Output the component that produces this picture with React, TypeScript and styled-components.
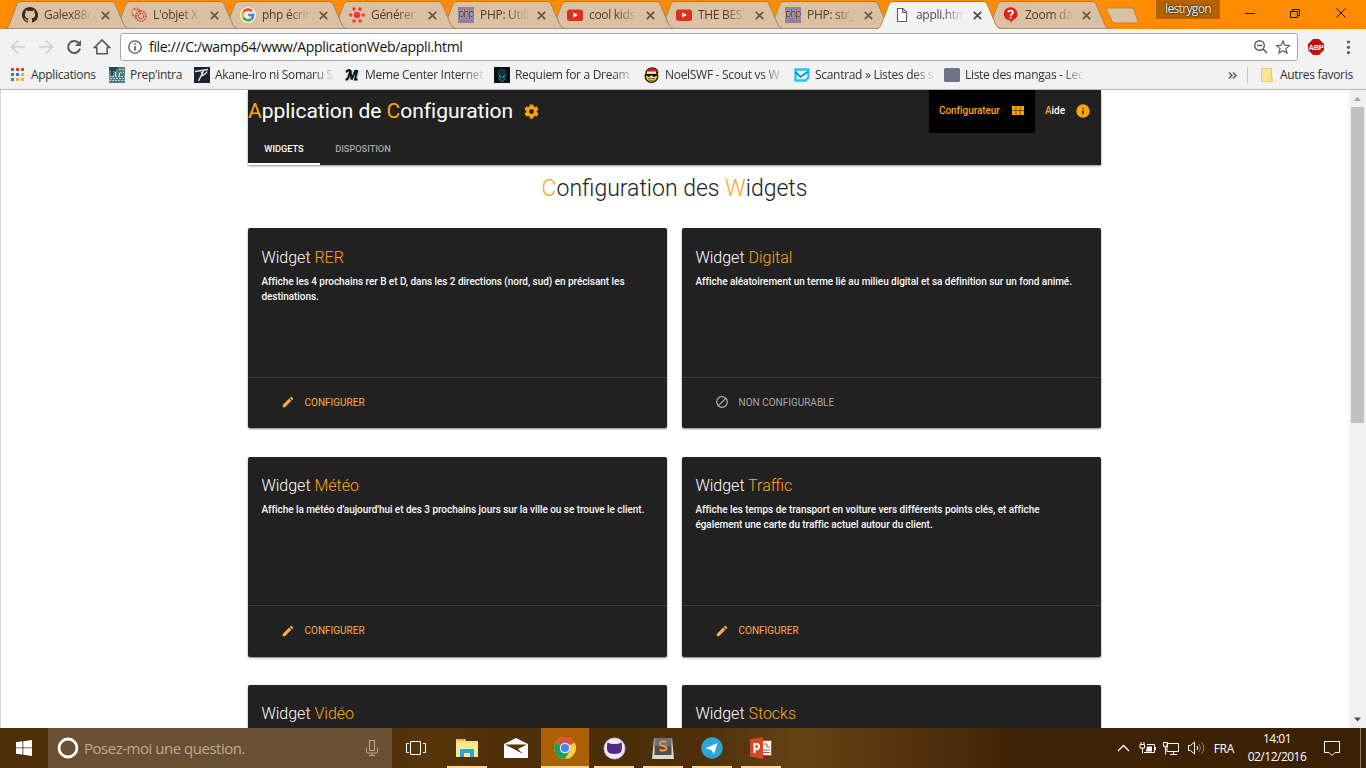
import React from "react";
import styled, { createGlobalStyle } from "styled-components";

const Global = createGlobalStyle`
  *, *::before, *::after { box-sizing: border-box; }
  body { margin: 0; overflow: hidden; background: #fff; }
  p, h1, h2, h3 { margin: 0; font-weight: 400; }
  svg { display: block; flex: none; }
`;

const Screen = styled.div`
  width: 1366px;
  height: 768px;
  display: flex;
  flex-direction: column;
  overflow: hidden;
  font-family: "Open Sans", "Noto Sans", sans-serif;
  font-size: 12px;
  color: #333;
`;

const Label = styled.span<{ $ls?: number; $w?: number }>`
  white-space: nowrap;
  letter-spacing: ${(p) => p.$ls ?? -0.3}px;
  ${(p) => (p.$w ? `width: ${p.$w}px; mask-image: linear-gradient(90deg, #000 ${p.$w - 22}px, transparent ${p.$w}px);` : "")}
`;

/* ---------- Tab strip ---------- */

const TabStrip = styled.div`
  display: flex;
  height: 29px;
  padding-left: 5px;
  background: #ff8c00;
`;

const TabItem = styled.div<{ $z: number }>`
  position: relative;
  z-index: ${(p) => p.$z};
  flex: none;
  width: 124px;
  height: 29px;
  margin-right: -15px;
`;

const TabShape = styled.svg`
  position: absolute;
  inset: 0;
`;

const TabContent = styled.div`
  position: relative;
  display: flex;
  align-items: center;
  height: 29px;
  padding-left: 17px;
  padding-top: 1px;
`;

const TabTitle = styled(Label)<{ $active?: boolean }>`
  flex: none;
  margin: 0 8px 0 6px;
  line-height: 18px;
  color: ${(p) => (p.$active ? "#4a4a4a" : "#4f3d29")};
`;

const NewTab = styled.svg`
  margin: 7px 0 0 10px;
`;

const UserBadge = styled.div`
  width: 64px;
  height: 19px;
  margin-left: 17px;
  background: #b36200;
  color: #fff;
  text-align: center;
  line-height: 18px;
  text-shadow: 0 0 2px #000, 0 0 1px #000;
`;

const WindowButtons = styled.svg`
  margin-left: 20px;
`;

/* ---------- Toolbar ---------- */

const Toolbar = styled.div`
  display: flex;
  align-items: center;
  height: 34px;
  padding: 2px 0 0 9px;
  background: #f2f2f2;
`;

const NavIcons = styled.svg`
  margin-right: 9px;
`;

const AddressBar = styled.div`
  display: flex;
  align-items: center;
  width: 1178px;
  height: 28px;
  padding: 0 6px 0 7px;
  border: 1px solid #a8a8a8;
  border-radius: 3px;
  background: #fff;
`;

const Url = styled.span`
  flex: 1;
  margin-left: 7px;
  font-size: 14px;
  line-height: 20px;
  letter-spacing: -0.32px;
  color: #111;
`;

const Bookmarks = styled.div`
  position: relative;
  display: flex;
  height: 27px;
  padding-left: 10px;
  border-bottom: 1px solid #b6b4b6;
  background: #f2f2f2;
`;

const Bookmark = styled.div<{ $w: number }>`
  display: flex;
  align-items: center;
  gap: 5px;
  flex: none;
  width: ${(p) => p.$w}px;
  height: 24px;
  color: #333;

  > span {
    margin-top: -1px;
  }
`;

const BarDivider = styled.div`
  width: 1px;
  height: 16px;
  margin: 4px 11px 0 8px;
  background: #c4c4c4;
`;

/* ---------- Page ---------- */

const Viewport = styled.div`
  display: flex;
  height: 638px;
  overflow: hidden;
  border-left: 1px solid #d8d8d8;
  background: #fff;
  font-family: Roboto, sans-serif;
`;

const Page = styled.main`
  flex: none;
  width: 853px;
  margin-left: 247px;
`;

const Header = styled.header`
  display: flex;
  flex-direction: column;
  height: 75px;
  background: #212121;
  box-shadow: 0 1px 2px rgba(0, 0, 0, 0.45);
`;

const HeaderTop = styled.div`
  display: flex;
  justify-content: space-between;
  height: 43px;
`;

const Brand = styled.h1`
  display: flex;
  align-items: center;
  gap: 10px;
  height: 42px;
  font-size: 21px;
  letter-spacing: -0.02px;
  color: #fff;
  white-space: pre;
`;

const Accent = styled.span`
  color: #ffa617;
`;

const Nav = styled.nav`
  display: flex;
`;

const NavLink = styled.a<{ $active?: boolean; $w: number }>`
  display: flex;
  align-items: center;
  justify-content: space-between;
  width: ${(p) => p.$w}px;
  height: 43px;
  padding: ${(p) => (p.$active ? "0 11px 2px 10px" : "0 10px 2px 10px")};
  background: ${(p) => (p.$active ? "#000" : "transparent")};
  color: ${(p) => (p.$active ? "#ffa617" : "#fff")};
  font-size: 10px;
  font-weight: 500;
  letter-spacing: -0.06px;
`;

const Tabs = styled.div`
  display: flex;
  height: 32px;
`;

const PageTab = styled.div<{ $active?: boolean; $w: number }>`
  width: ${(p) => p.$w}px;
  height: 32px;
  border-bottom: 2px solid ${(p) => (p.$active ? "#fff" : "transparent")};
  color: ${(p) => (p.$active ? "#fff" : "#a6a6a6")};
  text-align: center;
  font-size: 9.2px;
  font-weight: 500;
  line-height: 32px;
`;

const Title = styled.h2`
  height: 63.3px;
  padding-top: 10px;
  text-align: center;
  font-size: 23px;
  font-weight: 300;
  line-height: 28px;
  color: #212121;
`;

const Grid = styled.div`
  display: grid;
  grid-template-columns: 419px 419px;
  gap: 28.25px 15px;
`;

const Card = styled.article`
  display: flex;
  flex-direction: column;
  height: 200px;
  border-radius: 2px;
  background: #212121;
  box-shadow: 0 1px 2px rgba(0, 0, 0, 0.5);
`;

const CardBody = styled.div`
  flex: 1;
  padding: 18.5px 13px 0 13.4px;
`;

const CardTitle = styled.h3`
  font-size: 16px;
  line-height: 21px;
  font-weight: 300;
  color: #fff;
`;

const CardText = styled.p`
  margin-top: 6px;
  font-size: 10px;
  font-weight: 500;
  letter-spacing: -0.045px;
  line-height: 15px;
  color: #fafafa;
`;

const CardAction = styled.div<{ $off?: boolean }>`
  display: flex;
  align-items: center;
  gap: 9.5px;
  height: 51.1px;
  padding: 0 0 2px 33px;
  border-top: 1px solid #3a3a3a;
  color: ${(p) => (p.$off ? "#a8a8a8" : "#ffab40")};
  font-size: 10px;
`;

const Scrollbar = styled.div`
  display: flex;
  flex-direction: column;
  align-items: center;
  justify-content: space-between;
  width: 17px;
  height: 638px;
  margin-left: auto;
  background: #f1f1f1;
`;

const ScrollThumb = styled.div`
  width: 13px;
  height: 316px;
  margin-bottom: auto;
  background: #c1c1c1;
`;

/* ---------- Taskbar ---------- */

const Taskbar = styled.footer`
  display: flex;
  height: 40px;
  background: linear-gradient(90deg, #4c2e08 0, #4c2e08 380px, #563509 420px, #4a2c08 560px, #4e2f09 700px, #644414 800px, #5a3a11 860px, #4c2d0a 950px, #402304 1010px, #3a2005 1366px);
  color: #fff;
`;

const StartButton = styled.div`
  width: 48px;
  padding: 12px 0 0 16px;
`;

const Search = styled.div`
  display: flex;
  align-items: center;
  width: 344px;
  height: 40px;
  padding: 0 14px 0 8px;
  background: #6a5033;
  color: #b9aa98;
`;

const SearchText = styled.span`
  flex: 1;
  margin-left: 4px;
  font-size: 15px;
  letter-spacing: -0.48px;
`;

const TaskItem = styled.div<{ $w: number; $open?: boolean; $active?: boolean; $lead?: number }>`
  display: flex;
  align-items: center;
  justify-content: center;
  flex: none;
  width: ${(p) => p.$w}px;
  height: 40px;
  margin-left: ${(p) => p.$lead ?? 0}px;
  margin-right: ${(p) => (p.$open && !p.$active ? 9 : 0)}px;
  background: ${(p) => (p.$active ? "#ab6005" : "transparent")};
  box-shadow: ${(p) => (p.$open ? "inset 0 -2px #ffd59b" : "none")};
`;

const Tray = styled.div`
  display: flex;
  align-items: center;
  margin-left: auto;
`;

const Language = styled(Label)`
  margin-left: 9px;
`;

const Clock = styled.div`
  width: 60px;
  margin: 0 17px 0 13px;
  padding-bottom: 1px;
  text-align: center;
  line-height: 18px;
  letter-spacing: -0.5px;
  white-space: nowrap;
`;

const PeekLine = styled.div`
  width: 1px;
  height: 40px;
  margin: 0 5px 0 20px;
  background: #8b7a67;
`;

/* ---------- Icons ---------- */

const GithubMark = () => (
  <svg width="16" height="16" viewBox="0 0 16 16">
    <path fill="#3d2b1c" d="M8 0C3.58 0 0 3.58 0 8c0 3.54 2.29 6.53 5.47 7.59.4.07.55-.17.55-.38v-1.49c-2.01.37-2.53-.49-2.69-.94-.09-.23-.48-.94-.82-1.13-.28-.15-.68-.52-.01-.53.63-.01 1.08.58 1.23.82.72 1.21 1.87.87 2.33.66.07-.52.28-.87.51-1.07-1.78-.2-3.64-.89-3.64-3.95 0-.87.31-1.59.82-2.15-.08-.2-.36-1.02.08-2.12 0 0 .67-.21 2.2.82a7.6 7.6 0 0 1 4 0c1.53-1.04 2.2-.82 2.2-.82.44 1.1.16 1.92.08 2.12.51.56.82 1.27.82 2.15 0 3.07-1.87 3.75-3.65 3.95.29.25.54.73.54 1.48v2.2c0 .21.15.46.55.38A8 8 0 0 0 8 0z" />
  </svg>
);

const Swirl = () => (
  <svg width="16" height="16" viewBox="0 0 16 16" fill="none" stroke="#cc5234" strokeWidth="1.4" strokeDasharray="1.8 .8">
    <circle cx="5" cy="5" r="4" stroke="#d98a55" />
    <circle cx="10" cy="9" r="5.2" />
    <circle cx="10" cy="9" r="2.7" />
    <path d="M1 8c2 0 3 1 4 4M3 2l8 2" />
  </svg>
);

const GoogleG = () => (
  <svg width="16" height="16" viewBox="0 0 16 16">
    <circle cx="8" cy="8" r="8" fill="#f7efe6" />
    <g fill="none" strokeWidth="2.6">
      <path stroke="#ea4335" d="M3.4 5.2A5.2 5.2 0 0 1 11.8 4.2" />
      <path stroke="#fbbc05" d="M3.5 10.8a5.4 5.4 0 0 1 0-5.7" />
      <path stroke="#34a853" d="M11.8 11.7A5.3 5.3 0 0 1 3.4 10.7" />
      <path stroke="#4285f4" d="M8.2 8h5c0 1.8-.6 2.9-1.6 3.9" />
    </g>
  </svg>
);

const RedDots = () => (
  <svg width="16" height="16" viewBox="0 0 16 16" fill="#f0392b">
    <circle cx="8" cy="8" r="3.3" />
    <circle cx="5" cy="2" r="1.7" /><circle cx="11" cy="2" r="1.7" />
    <circle cx="1.8" cy="8" r="1.7" /><circle cx="14.2" cy="8" r="1.7" />
    <circle cx="5" cy="14" r="1.7" /><circle cx="11" cy="14" r="1.7" />
  </svg>
);

const PhpBox = styled.span`
  flex: none;
  width: 16px;
  height: 16px;
  background: #95809a;
  color: #1d1822;
  font: 400 10px/14px "Liberation Sans", sans-serif;
  letter-spacing: -0.5px;
  text-align: center;
  text-shadow: 0 0 1px #fff, 0 0 1px #fff;
`;

const Youtube = () => (
  <svg width="16" height="16" viewBox="0 0 16 16">
    <rect y="2.5" width="16" height="11.5" rx="2.5" fill="#e02f20" />
    <path d="M6.3 5.6v5l4.6-2.5z" fill="#fff" />
  </svg>
);

const DocIcon = () => (
  <svg width="16" height="16" viewBox="0 0 16 16" fill="#fff" stroke="#5d5d5d" strokeWidth="1.1">
    <path d="M3.5 1.5h5.3l3.7 3.7v9.3h-9zM8.6 1.5v4h4" />
  </svg>
);

const QuestionPin = () => (
  <svg width="16" height="16" viewBox="0 0 16 16">
    <path d="M7.5.3a6.6 6.6 0 0 1 2.6 12.8L7.7 16l-.6-2.4A6.6 6.6 0 0 1 7.5.3z" fill="#dd2418" />
    <path d="M5 5.2c.4-2 4.7-2.2 5 .1.1 1.6-2.3 1.7-2.3 3.4M7.6 9.7v1.8" stroke="#fff" strokeWidth="1.8" fill="none" />
  </svg>
);

const CloseX = ({ color }: { color: string }) => (
  <svg width="9" height="9" viewBox="0 0 9 9" stroke={color} strokeWidth="1.7">
    <path d="M.8.8l7.4 7.4M8.2.8L.8 8.2" />
  </svg>
);

const AppsGrid = () => (
  <svg width="16" height="16" viewBox="0 0 16 16">
    {["#e53935", "#e53935", "#e53935", "#1e9e52", "#2979f0", "#fbb01a", "#1e9e52", "#fbb01a", "#fbb01a"].map((c, i) => (
      <rect key={i} x={1 + (i % 3) * 5} y={1 + Math.floor(i / 3) * 5} width="3" height="3" fill={c} />
    ))}
  </svg>
);

const PrepIcon = () => (
  <svg width="16" height="16" viewBox="0 0 16 16">
    <path fill="#4f7f80" d="M0 0h16v16H0z" />
    <path fill="#24494e" d="M0 0h9v2H7v2H4v4H2V3H0z" />
    <path stroke="#b8d0cd" strokeDasharray="2 1" d="M0 9.500h16M1 11.500h14M0 13.500h16M10 2.500h5M11 5.500h4" />
    <path stroke="#dceae8" d="M10.500 6v3M6.500 5v4" />
  </svg>
);

const AkaneIcon = () => (
  <svg width="16" height="16" viewBox="0 0 16 16">
    <path fill="#192331" d="M0 0h16v16H0z" />
    <path d="M1 4.500l13-2M7 6l2-1-4.500 9M13 4.500C12 7 10 8 7 9" fill="none" stroke="#dfe5ec" strokeWidth="1.4" />
  </svg>
);

const MemeIcon = () => (
  <svg width="16" height="16" viewBox="0 0 16 16" fill="none">
    <path d="M2 13.500q2.500-1 3.500-6L6.500 3M7.500 13L11.500 3.500M11 13.500L13.500 3.500" stroke="#a9def0" strokeWidth="4.500" />
    <path d="M1.500 12.500q2.500.5 3.500-4L6.500 3M6.500 3l1 9.500M7.500 12.500L11.800 3M13.300 3L11 12.500h2.500M2.500 5.500q0-2.500 4-2.500" stroke="#0c1116" strokeWidth="1.900" />
  </svg>
);

const AlienIcon = () => (
  <svg width="16" height="16" viewBox="0 0 16 16">
    <path fill="#070e12" d="M0 0h16v16H0z" />
    <path d="M8 1.500c4 0 5 3 4.500 6S9.500 14 8 15c-1.500-1-4-4.500-4.500-7.500S4 1.500 8 1.500z" fill="#12313b" />
    <path d="M4 7l3 2.500v2zM12 7L9 9.500v2z" fill="#1ed4f4" />
    <path d="M4.500 11Q6 14 8 15q2-1 3.500-4" stroke="#1583a0" fill="none" />
  </svg>
);

const NoelIcon = () => (
  <svg width="16" height="16" viewBox="0 0 16 16">
    <circle cx="7.500" cy="9" r="6.300" fill="#ffd928" stroke="#1b1200" strokeWidth="1.300" />
    <path d="M2 5C3 .5 9 0 12.500 2l1.500 3.500z" fill="#e01515" stroke="#250404" />
    <path d="M3 5.200h9" stroke="#fff" strokeWidth="1.400" />
    <path d="M2 7h11v1.500L10 10 7.500 8.300 5 10 2 8.500zM4 11.300h7L9.500 13.500h-4z" fill="#120d00" />
    <path d="M5 12.200h5" stroke="#fff" />
  </svg>
);

const ScantradIcon = () => (
  <svg width="16" height="16" viewBox="0 0 16 16" fill="none">
    <path d="M1.500 2.500h13v8l-3 3h-10z" fill="#e4f7ff" stroke="#20c8f5" strokeWidth="2.400" />
    <path d="M1.500 5l5 5L14 4.500" stroke="#2787cf" strokeWidth="2" />
  </svg>
);

const FolderSheet = () => (
  <svg width="16" height="16" viewBox="0 0 16 16">
    <path d="M2.500 1.500h10v13h-10z" fill="#ffe694" stroke="#ebc95d" />
    <path d="M11.500 10.500h2v4h-2.500z" fill="#ffe694" stroke="#ebc95d" />
  </svg>
);

const Cog = () => (
  <svg width="17" height="17" viewBox="0 0 24 24" fill="#ffa500">
    <path d="M19.430 12.980c.040-.320.070-.640.070-.980s-.030-.660-.070-.980l2.110-1.650c.190-.150.240-.420.120-.640l-2-3.460c-.120-.220-.390-.300-.610-.220l-2.490 1c-.520-.400-1.080-.730-1.690-.980l-.380-2.650C14.460 2.180 14.250 2 14 2h-4c-.250 0-.460.180-.490.420l-.380 2.650c-.610.250-1.170.590-1.690.980l-2.490-1c-.230-.090-.490 0-.610.220l-2 3.460c-.130.220-.070.490.120.640l2.110 1.650c-.040.320-.070.650-.070.980s.030.660.070.980l-2.110 1.650c-.190.150-.240.420-.120.640l2 3.460c.120.220.390.300.610.220l2.490-1c.520.400 1.080.730 1.690.980l.380 2.650c.030.240.240.420.490.420h4c.250 0 .460-.180.490-.420l.380-2.650c.610-.250 1.170-.590 1.690-.980l2.490 1c.230.090.490 0 .610-.220l2-3.460c.120-.220.070-.490-.120-.640l-2.110-1.650zM12 15.500c-1.930 0-3.500-1.570-3.500-3.500s1.570-3.500 3.500-3.500 3.500 1.570 3.500 3.500-1.570 3.500-3.500 3.500z" />
  </svg>
);

const ViewModule = () => (
  <svg width="12" height="9" viewBox="0 0 12 9" fill="#ffa500">
    <path fill="#7c5000" d="M0 0h12v9H0z" />
    <path d="M0 0h3.500v4H0zM4.500 0h3v4h-3zM8.500 0H12v4H8.500zM0 5h3.500v4H0zM4.500 5h3v4h-3zM8.500 5H12v4H8.500z" />
  </svg>
);

const Info = () => (
  <svg width="16" height="16" viewBox="0 0 24 24" fill="#ffa500">
    <path d="M12 2a10 10 0 1 0 0 20 10 10 0 0 0 0-20zm1 15h-2v-6h2v6zm0-8h-2V7h2v2z" />
  </svg>
);

const Pencil = () => (
  <svg width="14" height="14" viewBox="0 0 24 24" fill="#ffab40">
    <path d="M3 17.250V21h3.750L17.810 9.940l-3.750-3.750L3 17.250zM20.710 7.040a1 1 0 0 0 0-1.410l-2.340-2.340a1 1 0 0 0-1.410 0l-1.830 1.830 3.750 3.750 1.830-1.830z" />
  </svg>
);

const Blocked = () => (
  <svg width="14" height="14" viewBox="0 0 14 14" fill="none" stroke="#b2b2b2" strokeWidth="1.200">
    <circle cx="7" cy="7" r="5.300" />
    <path d="M10.700 3.300l-7.400 7.400" />
  </svg>
);

const ChromeLogo = () => (
  <svg width="22" height="22" viewBox="0 0 22 22">
    <circle cx="11" cy="11" r="11" fill="#fdd04a" />
    <path d="M11 11L1.500 5.500A11 11 0 0 1 20.500 5.500z" fill="#e0503f" />
    <path d="M11 0a11 11 0 0 1 9.500 5.500H11z" fill="#e0503f" />
    <path d="M1.500 5.500A11 11 0 0 0 11 22l4.800-8.300L11 11z" fill="#1f9f5a" />
    <circle cx="11" cy="11" r="5.200" fill="#f4f4f4" />
    <circle cx="11" cy="11" r="4.100" fill="#4285f4" />
  </svg>
);

/* ---------- Data ---------- */

const tabs: { title: string; icon: React.ReactNode; active?: boolean }[] = [
  { title: "Galex88/", icon: <GithubMark /> },
  { title: "L'objet X", icon: <Swirl /> },
  { title: "php écrir", icon: <GoogleG /> },
  { title: "Générer", icon: <RedDots /> },
  { title: "PHP: Utili", icon: <PhpBox>php</PhpBox> },
  { title: "cool kids", icon: <Youtube /> },
  { title: "THE BEST", icon: <Youtube /> },
  { title: "PHP: str_", icon: <PhpBox>php</PhpBox> },
  { title: "appli.htm", icon: <DocIcon />, active: true },
  { title: "Zoom da", icon: <QuestionPin /> },
];

const bookmarks: { title: string; icon: React.ReactNode; w: number; text?: number }[] = [
  { title: "Applications", icon: <AppsGrid />, w: 99 },
  { title: "Prep'intra", icon: <PrepIcon />, w: 85 },
  { title: "Akane-Iro ni Somaru S", icon: <AkaneIcon />, w: 150, text: 120 },
  { title: "Meme Center Internet", icon: <MemeIcon />, w: 150, text: 120 },
  { title: "Requiem for a Dream", icon: <AlienIcon />, w: 150, text: 120 },
  { title: "NoelSWF - Scout vs W", icon: <NoelIcon />, w: 150, text: 120 },
  { title: "Scantrad » Listes des s", icon: <ScantradIcon />, w: 150, text: 120 },
];

const widgets = [
  { name: "RER", text: "Affiche les 4 prochains rer B et D, dans les 2 directions (nord, sud) en précisant les destinations." },
  { name: "Digital", text: "Affiche aléatoirement un terme lié au milieu digital et sa définition sur un fond animé.", off: true },
  { name: "Météo", text: "Affiche la météo d'aujourd'hui et des 3 prochains jours sur la ville ou se trouve le client." },
  { name: "Traffic", text: "Affiche les temps de transport en voiture vers différents points clés, et affiche également une carte du traffic actuel autour du client." },
  { name: "Vidéo", text: "" },
  { name: "Stocks", text: "" },
];

function BrowserTabs() {
  return (
    <TabStrip>
      {tabs.map((t, i) => (
        <TabItem key={i} $z={t.active ? 20 : 10 - i}>
          <TabShape width="124" height="29" viewBox="0 0 124 29">
            <path
              d="M0 29C3 28 3 27 4 25L12 4Q13 1.500 16 1.500H106Q109 1.500 110 4L119 25Q120 28 124 29z"
              fill={t.active ? "#f2f2f2" : "#dbc1a3"}
            />
            <path
              d="M0 28.500C3 28 3 27 4 25L12 4Q13 1.500 16 1.500H106Q109 1.500 110 4L119 25Q120 28 124 28.500"
              fill="none"
              stroke={t.active ? "#c08040" : "#a8835a"}
            />
            <path d="M15 1.500H107" stroke="#cf7306" />
            {!t.active && <path d="M1 28.500H123" stroke="#a58e78" />}
          </TabShape>
          <TabContent>
            {t.icon}
            <TabTitle $w={49} $active={t.active}>{t.title}</TabTitle>
            <CloseX color={t.active ? "#4a4a4a" : "#6b563f"} />
          </TabContent>
        </TabItem>
      ))}
      <NewTab width="34" height="18" viewBox="0 0 34 18">
        <path d="M2 1h24q2 0 3 2l4 11q.500 2-2 2H10q-2 0-3-2L1.500 3Q1 1 2 1z" fill="#dbc1a3" stroke="#b98343" />
      </NewTab>
      <UserBadge><Label $ls={-0.65}>lestrygon</Label></UserBadge>
      <WindowButtons width="120" height="28" viewBox="0 0 120 28" fill="none" stroke="#1c1002">
        <path d="M5 13.500h10M50.500 11.500h7v6h-7zM52.500 11V9.500h7v6h-2M96.500 8.500l9 9M105.500 8.500l-9 9" />
      </WindowButtons>
    </TabStrip>
  );
}

function BrowserToolbar() {
  return (
    <Toolbar>
      <NavIcons width="102" height="24" viewBox="0 0 102 24" fill="none" strokeWidth="2">
        <path stroke="#d0d0d0" strokeWidth="1.700" d="M16 12H3M9 5.500L2.500 12 9 18.500M30 12h13M37 5.500l6.500 6.500-6.500 6.500" />
        <path stroke="#5a5a5a" d="M70 8.500A6 6 0 1 0 71 13.500" />
        <path fill="#5a5a5a" d="M72 5v6h-6z" />
        <path stroke="#5a5a5a" strokeWidth="1.600" d="M85.500 12.500L93 5l7.500 7.500h-2.300v6.200H87.800v-6.200z" />
      </NavIcons>
      <AddressBar>
        <svg width="14" height="14" viewBox="0 0 14 14" fill="none" stroke="#555">
          <circle cx="7" cy="7" r="6.200" strokeWidth="1.300" />
          <path d="M7 6v4.500M7 3.300v1.500" strokeWidth="1.600" />
        </svg>
        <Url>file:///C:/wamp64/www/ApplicationWeb/appli.html</Url>
        <svg width="38" height="16" viewBox="0 0 38 16" fill="none" stroke="#5d5d5d" strokeWidth="1.400">
          <circle cx="6.500" cy="6.500" r="4.800" />
          <path d="M10 10l4 4M4 6.500h5" strokeWidth="1.600" />
          <path d="M30 2l1.800 4.200 4.600.4-3.500 3 1.100 4.500-4-2.400-4 2.400 1.100-4.500-3.500-3 4.600-.4z" strokeWidth="1.200" />
        </svg>
      </AddressBar>
      <svg width="62" height="18" viewBox="0 0 62 18">
        <path d="M15 1h6l5 5v6l-5 5h-6l-5-5V6z" fill="#c70d0d" />
        <text x="18" y="12" textAnchor="middle" fontFamily="Liberation Sans, sans-serif" fontWeight="700" fontSize="7.500" letterSpacing="-.3" fill="#fff">ABP</text>
        <g fill="#5d5d5d">
          <circle cx="50.500" cy="4" r="1.600" /><circle cx="50.500" cy="9.300" r="1.600" /><circle cx="50.500" cy="14.600" r="1.600" />
        </g>
      </svg>
    </Toolbar>
  );
}

function BookmarksBar() {
  return (
    <Bookmarks>
      {bookmarks.map((b) => (
        <Bookmark key={b.title} $w={b.w}>
          {b.icon}
          <Label $w={b.text}>{b.title}</Label>
        </Bookmark>
      ))}
      <Bookmark $w={284}>
        <svg width="16" height="16"><rect y="1" width="16" height="14" rx="1.500" fill="#6e7484" /></svg>
        <Label $w={120}>Liste des mangas - Lec</Label>
      </Bookmark>
      <Bookmark $w={11}>
        <svg width="11" height="9" viewBox="0 0 11 9" fill="none" stroke="#555" strokeWidth="1.400">
          <path d="M1 1.500L4 4.500 1 7.500M5 1.500L8 4.500 5 7.500" />
        </svg>
      </Bookmark>
      <BarDivider />
      <Bookmark $w={106}>
        <FolderSheet />
        <Label $ls={-0.32}>Autres favoris</Label>
      </Bookmark>
    </Bookmarks>
  );
}

function WebPage() {
  return (
    <Viewport>
      <Page>
        <Header>
          <HeaderTop>
            <Brand>
              <span><Accent>A</Accent>pplication de <Accent>C</Accent>onfiguration</span>
              <Cog />
            </Brand>
            <Nav>
              <NavLink $active $w={106}>Configurateur<ViewModule /></NavLink>
              <NavLink $w={66}><span><Accent>A</Accent>ide</span><Info /></NavLink>
            </Nav>
          </HeaderTop>
          <Tabs>
            <PageTab $active $w={72}>WIDGETS</PageTab>
            <PageTab $w={86}>DISPOSITION</PageTab>
          </Tabs>
        </Header>
        <Title><Accent>C</Accent>onfiguration des <Accent>W</Accent>idgets</Title>
        <Grid>
          {widgets.map((w) => (
            <Card key={w.name}>
              <CardBody>
                <CardTitle>Widget <Accent>{w.name}</Accent></CardTitle>
                <CardText>{w.text}</CardText>
              </CardBody>
              <CardAction $off={w.off}>
                {w.off ? <Blocked /> : <Pencil />}
                {w.off ? "NON CONFIGURABLE" : "CONFIGURER"}
              </CardAction>
            </Card>
          ))}
        </Grid>
      </Page>
      <Scrollbar>
        <svg width="17" height="17"><path d="M5 11l3.500-4 3.500 4z" fill="#a3a3a3" /></svg>
        <ScrollThumb />
        <svg width="17" height="17"><path d="M5 6.500l3.500 4 3.500-4z" fill="#505050" /></svg>
      </Scrollbar>
    </Viewport>
  );
}

function WindowsTaskbar() {
  return (
    <Taskbar>
      <StartButton>
        <svg width="16" height="16" viewBox="0 0 16 16" fill="#fff">
          <path d="M0 2.200L6.500 1.300v6.200H0zM7.300 1.200L16 0v7.500H7.300zM0 8.300h6.500v6.300L0 13.700zM7.300 8.300H16V16l-8.700-1.200z" />
        </svg>
      </StartButton>
      <Search>
        <svg width="24" height="24"><circle cx="12" cy="12" r="9" fill="none" stroke="#fff" strokeWidth="2.800" /></svg>
        <SearchText>Posez-moi une question.</SearchText>
        <svg width="12" height="16" viewBox="0 0 12 16" fill="none" stroke="#b9aa98">
          <rect x="3.500" y=".5" width="5" height="10" />
          <path d="M.5 7.500v4q0 1.500 1.500 1.500h8q1.500 0 1.500-1.500v-4M6 13v2.500M3 15.500h6" />
        </svg>
      </Search>
      <TaskItem $w={48}>
        <svg width="20" height="15" viewBox="0 0 20 15" fill="none" stroke="#fff">
          <path d="M4.500 .5h10v13h-10zM3 2.500H.5v9H3M17 2.500h2.500v9H17" />
        </svg>
      </TaskItem>
      <TaskItem $w={40} $open $lead={7}>
        <svg width="22" height="20" viewBox="0 0 22 20">
          <path d="M0 1h9l1 2h12v16H0z" fill="#f9dd80" />
          <path d="M1 2h7" stroke="#f3b52e" strokeWidth="2" />
          <path d="M0 5h22v14H0z" fill="#ffe798" />
          <path d="M4 11h14v8h-4v-4H8v4H4z" fill="#2ba5e0" />
        </svg>
      </TaskItem>
      <TaskItem $w={40}>
        <svg width="24" height="20" viewBox="0 0 24 20">
          <path d="M0 6L12 0l12 6v14H0z" fill="#fff" />
          <path d="M1 6.500h22L14 11l5 5z" fill="#573609" />
        </svg>
      </TaskItem>
      <TaskItem $w={48} $open $active $lead={5}><ChromeLogo /></TaskItem>
      <TaskItem $w={40} $open $lead={5}>
        <svg width="23" height="23" viewBox="0 0 23 23">
          <circle cx="11.500" cy="11.500" r="10.500" fill="#eceafa" stroke="#c4bce0" />
          <path d="M4.500 5.500l4 1.500h6l4-1.500c.500 2 1 7-.500 9.500-1.500 2.500-11.500 2.500-13 0C3.500 12.500 4 7.500 4.500 5.500z" fill="#532b80" />
        </svg>
      </TaskItem>
      <TaskItem $w={40} $open>
        <svg width="22" height="21" viewBox="0 0 22 21">
          <path d="M2 0h18l2 21H0z" fill="#d8d8d8" />
          <path d="M2.500 0h17v17h-17z" fill="#4f4f4f" />
          <path d="M3 0h16v8H3z" fill="#707070" />
          <path d="M14.500 4Q8 2 8 6q0 1.500 3.500 2t3 2.500Q14 13.500 7.500 12" fill="none" stroke="#ff9838" strokeWidth="1.800" />
        </svg>
      </TaskItem>
      <TaskItem $w={40} $open>
        <svg width="22" height="22" viewBox="0 0 22 22">
          <circle cx="11" cy="11" r="10.700" fill="#2da5dc" />
          <path d="M4.500 11.500L16.500 6l-3.500 11-2.500-4z" fill="#fff" />
        </svg>
      </TaskItem>
      <TaskItem $w={40} $open>
        <svg width="22" height="22" viewBox="0 0 22 22">
          <path d="M11 3.500h10.500v15H11z" fill="#fff" stroke="#d24726" />
          <path d="M14 7h3v3h3M13 13h7M13 15.500h7" stroke="#d24726" fill="none" />
          <path d="M0 2.500L13 0v22L0 19.500z" fill="#d24726" />
          <path d="M4.500 16V7h2.300q2.200.1 2.200 2.600t-2.200 2.600H4.500" fill="none" stroke="#fff" strokeWidth="2" />
        </svg>
      </TaskItem>
      <Tray>
        <svg width="88" height="16" viewBox="0 0 88 16" fill="none" stroke="#fff">
          <path d="M1 11l5.500-5.500L12 11" strokeWidth="1.300" />
          <path d="M30 4.500h7.500v8H27M38.500 7v3" />
          <path d="M30 6.500h5v5h-6z" fill="#fff" stroke="none" />
          <path d="M23 4.500h4.500v3.500h-4.500zM24 2v2M27 2v2M25.500 8v5.500" />
          <path d="M50 3.500h11.500v8H50zM56.500 12v2.500M53 14.500h7" />
          <path d="M46.500 2.500h4v4h-4zM48.500 6.500v8" />
          <path d="M71.500 5.500h2l4-3.500v12l-4-3.500h-2z" />
          <path d="M80 6q1.500 2 0 4" />
          <path d="M82 4q3 4 0 8M84.500 2q4.500 6 0 12" stroke="#8f7a62" />
        </svg>
        <Language>FRA</Language>
        <Clock>14:01<br />02/12/2016</Clock>
        <svg width="16" height="17" viewBox="0 0 16 17" fill="none" stroke="#fff">
          <path d="M.5 1.500h15v11H11L8 15.500 5 12.500H.5z" />
        </svg>
        <PeekLine />
      </Tray>
    </Taskbar>
  );
}

export default function App() {
  return (
    <Screen>
      <Global />
      <BrowserTabs />
      <BrowserToolbar />
      <BookmarksBar />
      <WebPage />
      <WindowsTaskbar />
    </Screen>
  );
}
